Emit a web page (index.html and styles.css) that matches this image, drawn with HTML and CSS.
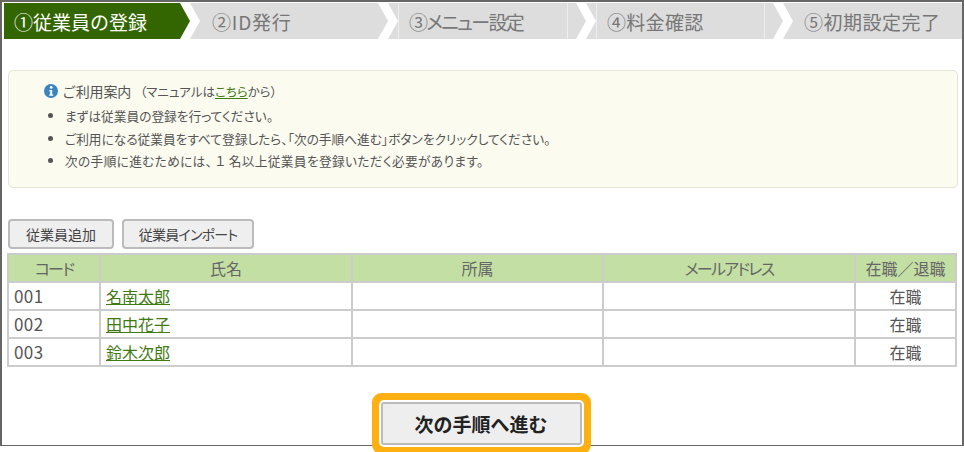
FILE: index.html
```html
<!DOCTYPE html>
<html lang="ja">
<head>
<meta charset="utf-8">
<title>従業員の登録</title>
<link rel="stylesheet" href="styles.css">
</head>
<body>
<div class="frame">
  <ol class="steps">
    <li class="step step-1 active">①従業員の登録</li>
    <li class="step step-2">②ID発行</li>
    <li class="step step-3">③メニュー設定</li>
    <li class="step step-4">④料金確認</li>
    <li class="step step-5">⑤初期設定完了</li>
  </ol>
  <section class="notice">
    <p class="notice-head">
      <svg class="info" viewBox="0 0 14 14" aria-hidden="true"><circle cx="7" cy="7" r="7" fill="#3a85c0"/><circle cx="7.2" cy="3.4" r="1.4" fill="#fff"/><path d="M5.2 6h3v4.6h1v1.2H5.2v-1.2h1V7.2h-1z" fill="#fff"/></svg>
      <span class="notice-title">ご利用案内</span>
      <span class="notice-sub">（マニュアルは<a href="#">こちら</a>から）</span>
    </p>
    <ul class="notice-list">
      <li>まずは従業員の登録を行ってください。</li>
      <li>ご利用になる従業員をすべて登録したら、「次の手順へ進む」ボタンをクリックしてください。</li>
      <li class="wide">次の手順に進むためには、 １ 名以上従業員を登録いただく必要があります。</li>
    </ul>
  </section>
  <div class="actions">
    <button class="btn btn-add">従業員追加</button>
    <button class="btn btn-import">従業員インポート</button>
  </div>
  <table class="staff">
    <colgroup><col class="c1"><col class="c2"><col class="c3"><col class="c4"><col class="c5"></colgroup>
    <thead>
      <tr><th class="kana">コード</th><th>氏名</th><th>所属</th><th class="kana">メールアドレス</th><th>在職／退職</th></tr>
    </thead>
    <tbody>
      <tr><td class="code">001</td><td><a href="#">名南太郎</a></td><td></td><td></td><td class="center">在職</td></tr>
      <tr><td class="code">002</td><td><a href="#">田中花子</a></td><td></td><td></td><td class="center">在職</td></tr>
      <tr><td class="code">003</td><td><a href="#">鈴木次郎</a></td><td></td><td></td><td class="center">在職</td></tr>
    </tbody>
  </table>
  <div class="next-wrap">
    <button class="next">次の手順へ進む</button>
  </div>
</div>
</body>
</html>
```
FILE: styles.css
```css
* { box-sizing: border-box; }
html, body { margin: 0; padding: 0; }
body {
  width: 964px;
  height: 452px;
  overflow: hidden;
  background: #fff;
  color: #555;
  font-family: "Noto Sans CJK JP", "Noto Sans", sans-serif;
}
.frame {
  width: 964px;
  height: 446px;
  border: 2px solid #666;
  border-bottom-width: 1px;
  padding: 1px 0 0 2px;
}
.steps {
  display: flex;
  list-style: none;
  margin: 0;
  padding: 0;
  height: 36px;
}
.step {
  display: flex;
  align-items: center;
  height: 36px;
  background-color: #ddd;
  color: #777;
  font-size: 19px;
  white-space: nowrap;
  clip-path: polygon(0 0, calc(100% - 10px) 0, 100% 50%, calc(100% - 10px) 100%, 0 100%, 10px 50%);
}
.step-1 {
  width: 186px;
  padding-left: 10px;
  background: #336600;
  color: #fff;
  clip-path: polygon(0 0, calc(100% - 10px) 0, 100% 50%, calc(100% - 10px) 100%, 0 100%);
}
.step-2 { width: 198px; padding-left: 22px; letter-spacing: .8px; }
.step-3 {
  width: 198px;
  padding-left: 21px;
  font-feature-settings: "palt";
  letter-spacing: -1.7px;
  background-image: linear-gradient(#eee, #eee), linear-gradient(#eee, #eee);
  background-size: 1px 100%;
  background-repeat: no-repeat;
  background-position: 10px 0, 179px 0;
}
.step-4 {
  width: 197px;
  padding-left: 21px;
  letter-spacing: .3px;
  background-image: linear-gradient(#eee, #eee), linear-gradient(#eee, #eee);
  background-size: 1px 100%;
  background-repeat: no-repeat;
  background-position: 10px 0, 178px 0;
}
.step-5 {
  flex: 1;
  padding-left: 21px;
  letter-spacing: .5px;
  clip-path: polygon(0 0, 100% 0, 100% 100%, 0 100%, 10px 50%);
}
.notice {
  width: 950px;
  height: 118px;
  margin: 31px 0 0 4px;
  padding: 10px 0 0 35px;
  background: #fbfbf0;
  border: 1px solid #e4e4d8;
  border-radius: 5px;
  font-size: 12.7px;
}
.notice-head {
  display: flex;
  align-items: center;
  height: 20px;
  margin: 0;
}
.info { width: 14px; height: 14px; margin-right: 4px; }
.notice-title { font-size: 14px; margin-right: 9px; letter-spacing: -.2px; }
.notice-sub { font-size: 12.5px; font-feature-settings: "palt"; }
a { color: #3f7a12; }
.notice-list {
  margin: 4px 0 0;
  padding: 0 0 0 21px;
  list-style: disc;
  font-feature-settings: "palt";
}
.notice-list li { height: 22.5px; line-height: 22px; }
.notice-list .wide { letter-spacing: .34px; }
.actions {
  display: flex;
  gap: 8px;
  margin: 31px 0 0 4px;
}
.btn {
  height: 30px;
  padding: 0;
  background: #efefef;
  border: 2px solid #bbb;
  border-radius: 4px;
  color: #444;
  font: 14px "Noto Sans CJK JP", sans-serif;
  font-feature-settings: "palt";
}
.btn-add { width: 106px; }
.btn-import { width: 132px; letter-spacing: -.8px; }
.staff {
  width: 950px;
  margin: 4px 0 0 3px;
  border-collapse: collapse;
  table-layout: fixed;
  font-size: 16px;
}
.c1 { width: 92px; }
.c2 { width: 252px; }
.c3 { width: 251px; }
.c4 { width: 252px; }
.staff th, .staff td {
  height: 28px;
  padding: 0 5px;
  border: 2px solid #ccc;
  font-weight: 400;
  line-height: 24px;
}
.staff th { background: #c3dfa3; text-align: center; color: #666; font-size: 16px; }
.staff th.kana { font-feature-settings: "palt"; letter-spacing: -1.7px; }
.staff td.code { font-size: 17px; letter-spacing: .4px; }
.center { text-align: center; }
.next-wrap {
  display: flex;
  justify-content: center;
  margin: 35px 0 0;
  padding-right: 4px;
}
.next {
  width: 201px;
  height: 43px;
  padding: 0;
  background: #eee;
  border: 2px solid #bbb;
  border-radius: 3px;
  color: #222;
  font: 700 19px "Noto Sans CJK JP", sans-serif;
  box-shadow: 0 0 0 2px #fff, 0 0 0 9px #fdb00f;
}
```
